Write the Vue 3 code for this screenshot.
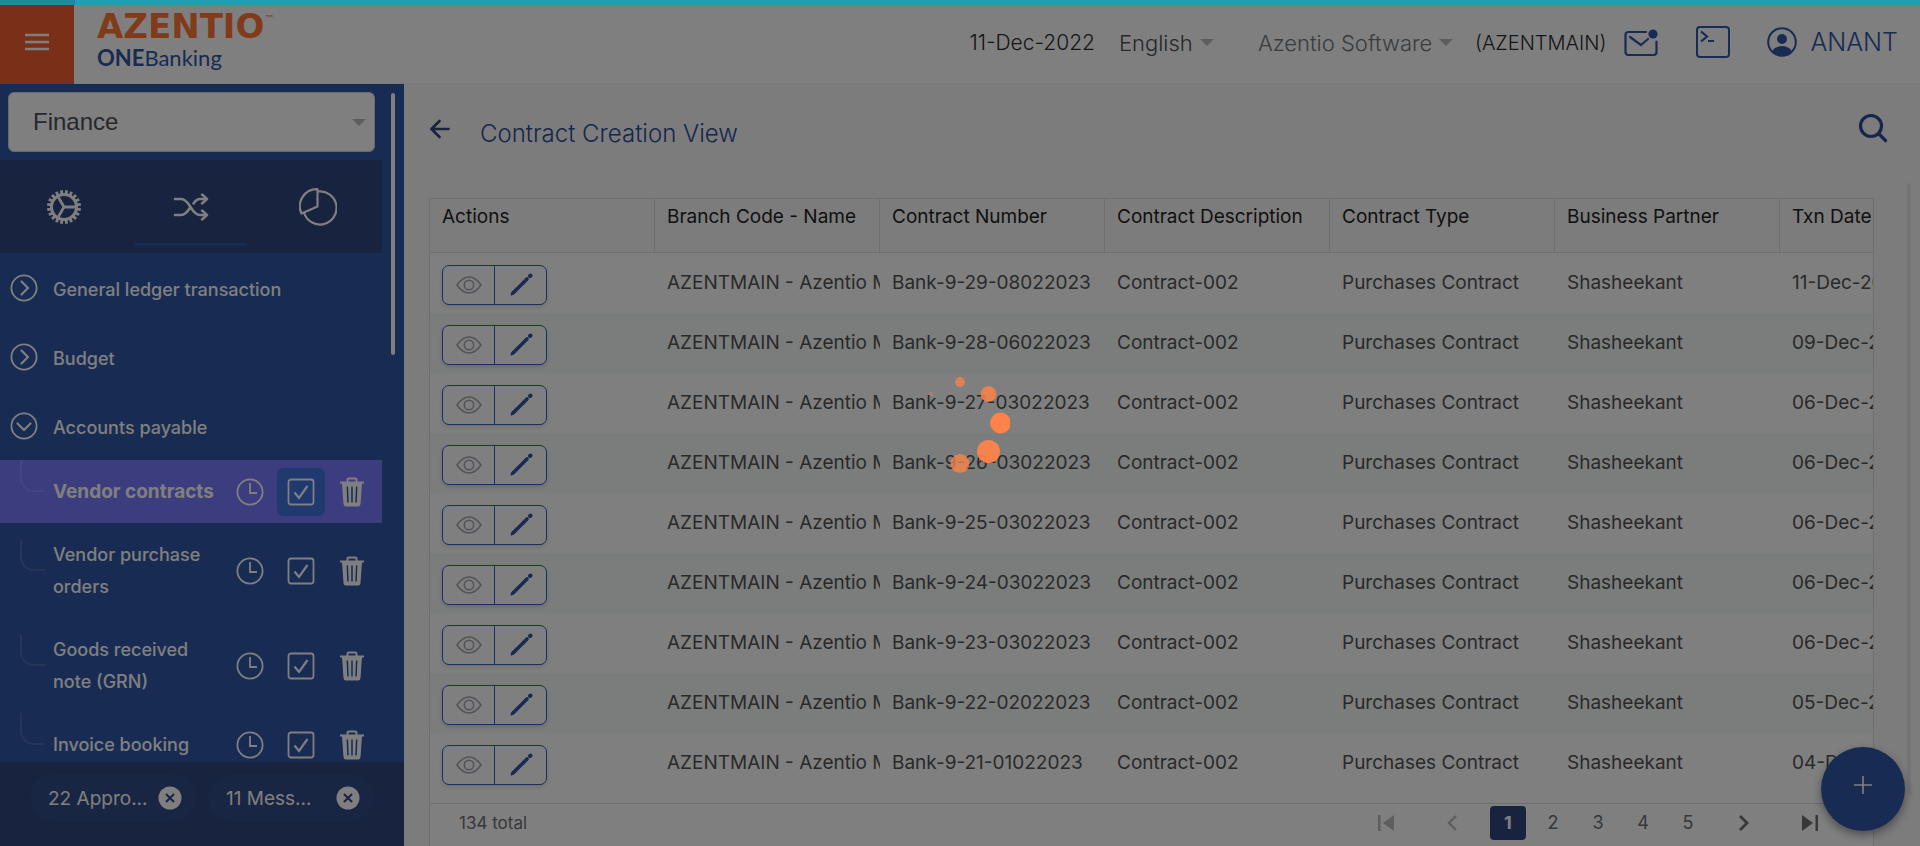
<script setup>
import { ref } from 'vue'

const groups = ['General ledger transaction', 'Budget', 'Accounts payable']
const entries = ['Vendor contracts', 'Vendor purchase orders', 'Goods received note (GRN)', 'Invoice booking']
const chips = ['22 Appro...', '11 Mess...']
const columns = ['Actions', 'Branch Code - Name', 'Contract Number', 'Contract Description', 'Contract Type', 'Business Partner', 'Txn Date']
const rows = [
  ['Bank-9-29-08022023', '11-Dec-2022'],
  ['Bank-9-28-06022023', '09-Dec-2022'],
  ['Bank-9-27-03022023', '06-Dec-2022'],
  ['Bank-9-26-03022023', '06-Dec-2022'],
  ['Bank-9-25-03022023', '06-Dec-2022'],
  ['Bank-9-24-03022023', '06-Dec-2022'],
  ['Bank-9-23-03022023', '06-Dec-2022'],
  ['Bank-9-22-02022023', '05-Dec-2022'],
  ['Bank-9-21-01022023', '04-Dec-2022']
]
const teeth = Array.from({ length: 20 }, (_, i) => i * 18)
const active = ref(0)
const page = ref(1)
</script>

<template>
  <div class="app">
    <header class="topbar">
      <button class="menu" aria-label="Menu">
        <svg width="24" height="18" viewBox="0 0 24 18"><path d="M0 2h24M0 9h24M0 16h24" stroke="#fff" stroke-width="2.4" /></svg>
      </button>
      <a class="brand" href="#">
        <span class="brand-name">AZENTIO<sup>™</sup></span>
        <span class="brand-sub"><b>ONE</b>Banking</span>
      </a>
      <span class="date">11-Dec-2022</span>
      <span class="pick lang">
        <select aria-label="Language"><option>English</option></select>
        <i class="caret"></i>
      </span>
      <span class="pick company">
        <select aria-label="Company"><option>Azentio Software</option></select>
        <i class="caret"></i>
      </span>
      <span class="branch">(AZENTMAIN)</span>
      <button class="bare mail" aria-label="Messages">
        <svg width="34" height="28" viewBox="0 0 34 28" fill="none" stroke="#3056a6" stroke-width="2.2">
          <path d="M22 3H4.500Q1.500 3 1.500 6v17q0 3 3 3h25q3 0 3-3V12.500" stroke-linecap="round" />
          <path d="M6 8l11 8 7-6" stroke-linecap="round" stroke-linejoin="round" />
          <circle cx="29" cy="5" r="4.600" fill="#3056a6" stroke="none" />
        </svg>
      </button>
      <button class="bare term" aria-label="Console">
        <svg width="34" height="32" viewBox="0 0 34 32" fill="none" stroke="#3056a6" stroke-width="2">
          <rect x="1" y="1" width="32" height="30" rx="3" />
          <path d="M5 5.500l6 5-6 5M12 15h6" stroke-width="2.200" />
        </svg>
      </button>
      <button class="bare user">
        <svg width="30" height="30" viewBox="0 0 30 30">
          <clipPath id="face"><circle cx="15" cy="15" r="14" /></clipPath>
          <circle cx="15" cy="15" r="13.800" fill="none" stroke="#3056a6" stroke-width="2" />
          <circle cx="15" cy="12" r="5" fill="#3056a6" />
          <ellipse cx="15" cy="26" rx="10" ry="7" fill="#3056a6" clip-path="url(#face)" />
        </svg>
        <span>ANANT</span>
      </button>
    </header>

    <div class="body">
      <aside class="side">
        <div class="scroll">
          <div class="list">
            <div class="module">
              <select aria-label="Module"><option>Finance</option></select>
              <i class="caret"></i>
            </div>
            <div class="tabs">
              <button class="tab" aria-label="Settings">
                <svg width="34" height="34" viewBox="0 0 34 34" fill="none" stroke="#fff">
                  <circle cx="17" cy="17" r="12.500" stroke-width="3" />
                  <path v-for="t in teeth" :key="t" d="M17 0v4" stroke-width="2.800" :transform="`rotate(${t + 9} 17 17)`" />
                  <path d="M17 17h12M17 17l-6-10.400M17 17l-6 10.400" stroke-width="2.800" />
                </svg>
              </button>
              <button class="tab on" aria-label="Transactions">
                <svg width="36" height="28" viewBox="0 0 36 28" fill="none" stroke="#fff" stroke-width="2.500" stroke-linecap="round" stroke-linejoin="round">
                  <path d="M2 6h6c4 0 6.500 3 9.500 8s6 8 9.500 8h6M2 22h6c4 0 6.500-3 9.500-8M20.500 10.500C22.500 7.500 24.500 6 27 6h6" />
                  <path d="M29 1.500L34 6l-5 4.500M29 17.500L34 22l-5 4.500" />
                </svg>
              </button>
              <button class="tab" aria-label="Reports">
                <svg width="38" height="38" viewBox="0 0 38 38" fill="none" stroke="#fff" stroke-width="2.200" stroke-linejoin="round">
                  <path d="M18.500 1.200a17 17 0 0 0-16 24.300l16-7z" />
                  <path d="M18.500 3.500A16.600 16.600 0 1 1 5 24.500" />
                </svg>
              </button>
            </div>
            <button v-for="(g, i) in groups" :key="g" class="group">
              <svg width="28" height="28" viewBox="0 0 28 28" fill="none" stroke="#fff" stroke-width="1.800" stroke-linecap="round" stroke-linejoin="round">
                <circle cx="14" cy="14" r="12.600" />
                <path :d="i === 2 ? 'M7.500 11.500L14 18l6.500-6.500' : 'M11.500 7.500L18 14l-6.500 6.500'" stroke-width="2.200" />
              </svg>
              <span>{{ g }}</span>
            </button>
            <div v-for="(e, i) in entries" :key="e" class="entry" :class="{ on: i === active }">
              <i class="elbow"></i>
              <a class="name" href="#" @click.prevent="active = i">{{ e }}</a>
              <button class="tool" aria-label="History">
                <svg width="28" height="28" viewBox="0 0 28 28" fill="none" stroke="#fff" stroke-width="1.800">
                  <circle cx="14" cy="14" r="12.600" /><path d="M14 5v10h7" />
                </svg>
              </button>
              <button class="tool check" aria-label="Approve">
                <svg width="28" height="28" viewBox="0 0 28 28" fill="none" stroke="#fff" stroke-width="1.800">
                  <rect x="1.500" y="1.500" width="25" height="25" rx="2.500" /><path d="M7.500 14.500l4.500 5.500 8.500-12" stroke-width="2.200" />
                </svg>
              </button>
              <button class="tool" aria-label="Delete">
                <svg width="26" height="30" viewBox="0 0 26 30" fill="none" stroke="#fff">
                  <path d="M1 5.500h24" stroke-width="2" />
                  <path d="M8.500 5V2.500q0-1 1-1h7q1 0 1 1V5" stroke-width="2" />
                  <path d="M3 6h20l-1.500 21q-.200 2.500-2.500 2.500H7q-2.300 0-2.500-2.500z" fill="#fff" stroke="none" />
                  <path d="M8.300 9.500l.700 16M13 9.500v16M17.700 9.500l-.700 16" stroke="#3056a6" stroke-width="1.500" />
                </svg>
              </button>
            </div>
          </div>
          <i class="thumb"></i>
        </div>
        <div class="chips">
          <span v-for="c in chips" :key="c" class="chip">
            <span>{{ c }}</span>
            <button aria-label="Dismiss">
              <svg width="24" height="24" viewBox="0 0 24 24"><circle cx="12" cy="12" r="11.500" fill="#fff" /><path d="M8 8l8 8M16 8l-8 8" stroke="#2e467e" stroke-width="2" /></svg>
            </button>
          </span>
        </div>
      </aside>

      <main class="main">
        <div class="heading">
          <button class="bare back" aria-label="Back">
            <svg width="20" height="20" viewBox="0 0 20 20" fill="none" stroke="#2e467e" stroke-width="2.600" stroke-linecap="round" stroke-linejoin="round"><path d="M18.500 10H2M9.500 2L1.500 10l8 8" /></svg>
          </button>
          <h1>Contract Creation View</h1>
          <button class="bare find" aria-label="Search">
            <svg width="30" height="30" viewBox="0 0 30 30" fill="none" stroke="#2e4c98" stroke-width="3.200" stroke-linecap="round"><circle cx="13" cy="13" r="10.500" /><path d="M21 21l6.500 6.500" /></svg>
          </button>
        </div>
        <div class="content">
          <section class="grid">
            <table>
              <thead>
                <tr><th v-for="c in columns" :key="c" scope="col">{{ c }}</th></tr>
              </thead>
              <tbody>
                <tr v-for="r in rows" :key="r[0]">
                  <td>
                    <div class="pair">
                      <button aria-label="View">
                        <svg width="26" height="18" viewBox="0 0 26 18" fill="none" stroke="#a6a8b0" stroke-width="1.600"><path d="M1 9Q6.500 1 13 1t12 8q-5.500 8-12 8T1 9z" /><circle cx="13" cy="9" r="4.700" /></svg>
                      </button>
                      <button aria-label="Edit">
                        <svg width="24" height="24" viewBox="0 0 24 24" stroke="#3056a6" stroke-linecap="round"><path d="M2.500 21.500L4 19" stroke-width="2" /><path d="M4 20L18 6" stroke-width="3.600" /><path d="M21 3l.500-.500" stroke-width="4" /></svg>
                      </button>
                    </div>
                  </td>
                  <td>AZENTMAIN - Azentio Main</td>
                  <td>{{ r[0] }}</td>
                  <td>Contract-002</td>
                  <td>Purchases Contract</td>
                  <td>Shasheekant</td>
                  <td>{{ r[1] }}</td>
                </tr>
              </tbody>
            </table>
            <footer class="pager">
              <span>134 total</span>
              <nav aria-label="Pages">
                <button class="dim" aria-label="First"><svg width="16" height="16" viewBox="0 0 16 16" fill="currentColor"><path d="M0 0h2.500v16H0zM16 0v16L5 8z" /></svg></button>
                <button class="dim prev" aria-label="Previous"><svg width="10" height="16" viewBox="0 0 10 16" fill="none" stroke="currentColor" stroke-width="2.400"><path d="M9 1L2 8l7 7" /></svg></button>
                <button v-for="n in 5" :key="n" class="num" :class="{ on: n === page }" @click="page = n">{{ n }}</button>
                <button class="next" aria-label="Next"><svg width="10" height="16" viewBox="0 0 10 16" fill="none" stroke="currentColor" stroke-width="2.800"><path d="M1 1l7 7-7 7" /></svg></button>
                <button aria-label="Last"><svg width="16" height="16" viewBox="0 0 16 16" fill="currentColor"><path d="M13.500 0H16v16h-2.500zM0 0v16l11-8z" /></svg></button>
              </nav>
            </footer>
          </section>
          <i class="track"></i>
        </div>
        <button class="fab" aria-label="Add">
          <svg width="18" height="18" viewBox="0 0 18 18"><path d="M9 0v18M0 9h18" stroke="#fff" stroke-width="1.600" /></svg>
        </button>
      </main>
    </div>

    <div class="veil" role="status" aria-label="Loading">
      <svg width="100" height="100" viewBox="0 0 100 100" fill="#ff8348">
        <circle cx="21" cy="21" r="2" opacity=".35" />
        <circle cx="50" cy="9" r="5" opacity=".7" />
        <circle cx="78.500" cy="21" r="7.800" opacity=".84" />
        <circle cx="90.500" cy="50" r="10.400" />
        <circle cx="78.500" cy="78.500" r="11.500" opacity=".92" />
        <circle cx="50" cy="90.500" r="9.500" opacity=".76" />
      </svg>
    </div>
    <div class="progress"></div>
  </div>
</template>

<style>
body { margin: 0; overflow: hidden; }
</style>

<style scoped>
* { box-sizing: border-box; }
.app {
  position: relative;
  height: 100vh;
  display: flex;
  flex-direction: column;
  overflow: hidden;
  font-family: Inter, "Liberation Sans", sans-serif;
  font-size: 19px;
  background: #f8f8f8;
}
button { font: inherit; border: 0; padding: 0; margin: 0; background: none; color: inherit; cursor: pointer; }
svg { display: block; }
a { color: inherit; text-decoration: none; }
select { appearance: none; border: 0; background: none; font: inherit; color: inherit; padding: 0; margin: 0; }
.caret { border: 7px solid transparent; border-top-color: #b8babc; border-bottom: 0; pointer-events: none; }

.topbar { flex: none; height: 84px; padding-right: 22px; display: flex; align-items: center; background: #fff; border-bottom: 1px solid #f4f4f4; color: #2c2c2c; font-size: 20px; font-weight: 300; }
.menu { width: 74px; height: 84px; display: grid; place-items: center; background: #f46030; }
.brand { margin: 0 auto 0 23px; display: flex; flex-direction: column; }
.brand-name { font: 700 34px/32px "DejaVu Sans", sans-serif; color: #ff7634; }
.brand-name sup { font-size: 10px; line-height: 10px; font-weight: 400; vertical-align: 16px; }
.brand-sub { font: 400 22px/32px Lato, sans-serif; color: #3056a6; }
.date, .pick, .branch, .mail { padding-top: 2px; }
.date { font-size: 21px; }
.pick { display: flex; align-items: center; font-size: 22px; color: #4c5056; }
.lang { margin-left: 24px; gap: 7px; }
.company { margin-left: 44px; gap: 6px; color: #74787c; }
.branch { margin-left: 22px; }
.bare { display: flex; align-items: center; color: #3056a6; }
.mail { margin-left: 18px; }
.term { margin-left: 38px; }
.user { margin-left: 37px; gap: 13px; font-size: 25px; font-weight: 300; }

.body { flex: 1; min-height: 0; display: flex; }
.side { flex: none; width: 404px; display: flex; flex-direction: column; background: #3056a6; color: #fff; }
.scroll { flex: 1; min-height: 0; display: flex; overflow: hidden; }
.list { width: 382px; flex: none; }
.thumb { width: 4px; height: 262px; margin: 9px 0 0 9px; border-radius: 2px; background: #fff; }
.module { margin: 8px 7px 8px 8px; height: 60px; display: flex; align-items: center; padding-right: 8px; border: 1px solid #d0d4dc; border-radius: 6px; background: #fff; color: #4c5056; font: 24px "Liberation Sans", sans-serif; }
.module select { flex: 1; height: 58px; padding: 0 0 2px 24px; }
.tabs { height: 93px; display: flex; background: #2e467e; }
.tab { flex: 1; height: 86px; margin: 0 8px; padding-top: 10px; display: flex; align-items: center; justify-content: center; border-bottom: 3px solid transparent; }
.tab.on { border-color: #3056a6; }
.group { width: 100%; height: 69px; display: flex; align-items: center; gap: 15px; padding-left: 10px; font-size: 18px; font-weight: 500; }
.group span { padding-top: 3px; }
.entry { display: flex; align-items: center; padding: 16px 6px 15px 20px; font-size: 18px; line-height: 32px; font-weight: 500; }
.entry.on { background: #767afc; font-size: 19px; font-weight: 700; }
.elbow { flex: none; width: 25px; height: 32px; margin: -16px 8px 16px 0; border: 2px solid #ffffff20; border-width: 0 0 2px 2px; border-bottom-left-radius: 14px; }
.name { flex: 1; padding-right: 4px; }
.tool { flex: none; width: 48px; height: 48px; margin: -9px 0; display: grid; place-items: center; border-radius: 7px; }
.check { margin-left: 3px; margin-right: 3px; }
.entry.on .check { background: #4072dc; }
.chips { flex: none; height: 84px; display: flex; align-items: flex-start; gap: 12px; padding: 12px 30px; background: #2e467e; }
.chip { flex: 1; height: 48px; display: flex; align-items: center; justify-content: space-between; padding: 0 14px 0 18px; border-radius: 24px; background: #304c88; }

.main { position: relative; flex: 1; min-width: 0; display: flex; flex-direction: column; }
.heading { flex: none; height: 98px; display: flex; align-items: center; padding: 0 32px 8px 26px; }
.back { margin-right: 30px; }
.find { margin-bottom: 2px; }
h1 { margin: 8px auto 0 0; font-size: 24px; font-weight: 300; color: #2e4c98; }
.content { flex: 1; min-height: 0; display: flex; align-items: flex-start; padding: 16px 9px 0 25px; }
.grid { flex: 1; min-width: 0; min-height: 100%; border: 1px solid #dcdee0; overflow: hidden; background: #fff; }
.track { width: 4px; height: 612px; margin: -15px 0 0 33px; border-radius: 2px; background: #e4e8ea; }
table { width: 1575px; table-layout: fixed; border-collapse: separate; border-spacing: 0; }
th { height: 54px; padding: 4px 0 0 12px; vertical-align: top; text-align: left; font-weight: 400; line-height: 28px; white-space: nowrap; color: #222; background: #f9f9f9; border-right: 1px solid #dcdee0; border-bottom: 1px solid #dcdee0; }
td { height: 60px; padding: 12px 0 0 12px; vertical-align: top; font-weight: 400; line-height: 36px; white-space: nowrap; overflow: hidden; color: #545454; }
tr:nth-child(even) td { background: #f4faf6; }
.pair { width: 105px; height: 40px; display: flex; border: 1px solid #3460c0; border-radius: 7px; background: #fff; box-shadow: 0 2px 4px #0002; }
.pair button { flex: 1; display: grid; place-items: center; }
.pair button + button { border-left: 1px solid #3460c0; }
.pager { margin-top: 10px; height: 60px; border-top: 1px solid #dcdee0; padding: 2px 55px 0 29px; display: flex; align-items: flex-start; justify-content: space-between; font-size: 17px; line-height: 34px; color: #6c7074; }
.pager nav { display: flex; align-items: center; height: 34px; }
.pager .dim { color: #bcbcbc; }
.prev { margin: 0 33px 0 53px; }
.num { width: 36px; height: 34px; margin-right: 9px; border-radius: 4px; font-size: 18px; }
.num.on { background: #2e467e; color: #fff; font-weight: 700; }
.next { margin: 0 53px 0 24px; }
.fab { position: absolute; right: 15px; bottom: 15px; width: 84px; height: 84px; display: grid; place-items: center; padding-bottom: 8px; border-radius: 50%; background: #3056a6; box-shadow: 0 4px 10px #0006; }
.veil { position: absolute; inset: 0; display: grid; place-items: center; background: #00000080; }
.progress { position: absolute; top: 0; left: 0; right: 0; height: 5px; background: linear-gradient(to right, #1d8d98 75px, #219fb0 75px); }
</style>
